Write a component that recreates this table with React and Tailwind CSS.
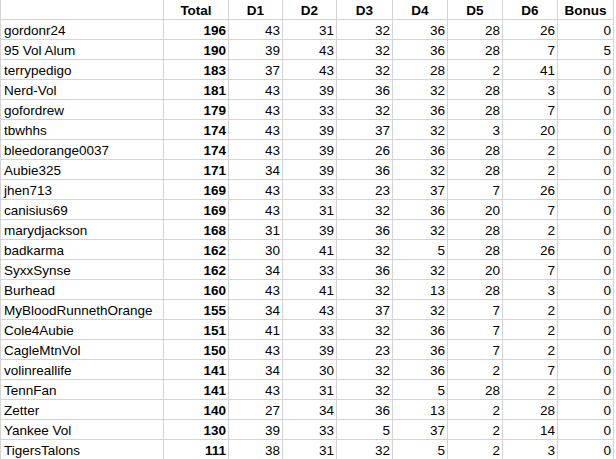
import React from "react";

const rows = [
  ["gordonr24", 196, 43, 31, 32, 36, 28, 26, 0],
  ["95 Vol Alum", 190, 39, 43, 32, 36, 28, 7, 5],
  ["terrypedigo", 183, 37, 43, 32, 28, 2, 41, 0],
  ["Nerd-Vol", 181, 43, 39, 36, 32, 28, 3, 0],
  ["gofordrew", 179, 43, 33, 32, 36, 28, 7, 0],
  ["tbwhhs", 174, 43, 39, 37, 32, 3, 20, 0],
  ["bleedorange0037", 174, 43, 39, 26, 36, 28, 2, 0],
  ["Aubie325", 171, 34, 39, 36, 32, 28, 2, 0],
  ["jhen713", 169, 43, 33, 23, 37, 7, 26, 0],
  ["canisius69", 169, 43, 31, 32, 36, 20, 7, 0],
  ["marydjackson", 168, 31, 39, 36, 32, 28, 2, 0],
  ["badkarma", 162, 30, 41, 32, 5, 28, 26, 0],
  ["SyxxSynse", 162, 34, 33, 36, 32, 20, 7, 0],
  ["Burhead", 160, 43, 41, 32, 13, 28, 3, 0],
  ["MyBloodRunnethOrange", 155, 34, 43, 37, 32, 7, 2, 0],
  ["Cole4Aubie", 151, 41, 33, 32, 36, 7, 2, 0],
  ["CagleMtnVol", 150, 43, 39, 23, 36, 7, 2, 0],
  ["volinreallife", 141, 34, 30, 32, 36, 2, 7, 0],
  ["TennFan", 141, 43, 31, 32, 5, 28, 2, 0],
  ["Zetter", 140, 27, 34, 36, 13, 2, 28, 0],
  ["Yankee Vol", 130, 39, 33, 5, 37, 2, 14, 0],
  ["TigersTalons", 111, 38, 31, 32, 5, 2, 3, 0],
];

const headers = ["", "Total", "D1", "D2", "D3", "D4", "D5", "D6", "Bonus"];

const cell = "h-[20px] flex items-end border-r border-b border-[#d4d4d4] leading-[16px] whitespace-nowrap overflow-hidden";

export default function App() {
  return (
    <div className="w-[616px] h-[459px] overflow-hidden bg-white text-black text-[13.5px]" style={{ fontFamily: '"Liberation Sans", Arial, sans-serif' }}>
      <div className="grid grid-cols-[164px_65px_54px_54px_56px_55px_55px_55px_56px]">
        {headers.map((h, i) => (
          <div key={"h" + i} className={cell + " justify-center font-bold" + (i === 0 ? " border-l" : "")}>
            {h}
          </div>
        ))}
        {rows.map((r) =>
          r.map((v, i) => (
            <div
              key={r[0] + i}
              className={
                cell +
                (i === 0 ? " border-l pl-[3px]" : " justify-end pr-[2px]") +
                (i === 1 ? " font-bold" : "")
              }
            >
              {v}
            </div>
          ))
        )}
      </div>
    </div>
  );
}
